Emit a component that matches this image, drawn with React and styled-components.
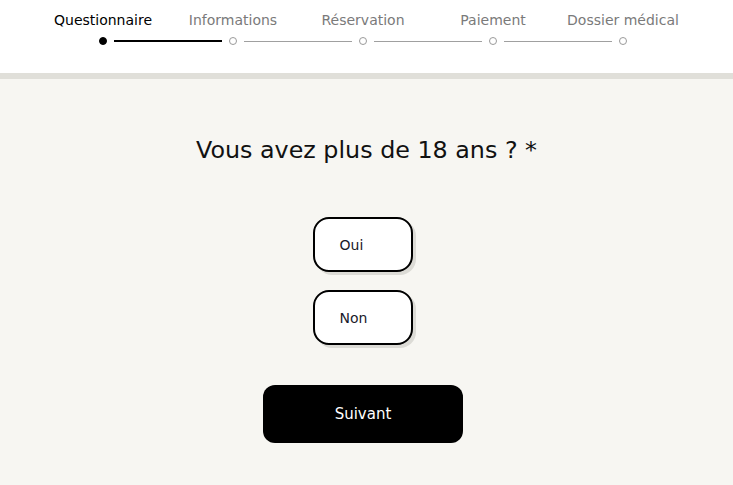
import styled, { createGlobalStyle } from "styled-components";

const GlobalStyle = createGlobalStyle`
  html, body {
    margin: 0;
    padding: 0;
    background: #f7f6f2;
    font-family: "DejaVu Sans", "Liberation Sans", sans-serif;
  }
`;

const steps = ["Questionnaire", "Informations", "Réservation", "Paiement", "Dossier médical"];

export default function App() {
  const current = 0;
  return (
    <>
      <GlobalStyle />
      <Page>
        <Header>
          <Labels>
            {steps.map((s, i) => (
              <Label key={s} active={i === current}>
                {s}
              </Label>
            ))}
          </Labels>
          <Track>
            {steps.map((s, i) => (
              <Step key={s}>
                <Dot active={i === current} />
                {i < steps.length - 1 && <Line active={i === current} />}
              </Step>
            ))}
          </Track>
        </Header>
        <Main>
          <Question>Vous avez plus de 18 ans ? *</Question>
          <Choices>
            <Choice>Oui</Choice>
            <Choice>Non</Choice>
          </Choices>
          <NextButton>Suivant</NextButton>
        </Main>
      </Page>
    </>
  );
}

const Page = styled.div`
  width: 733px;
  min-height: 485px;
  background: #f7f6f2;
`;

const Header = styled.header`
  background: #ffffff;
  border-bottom: 6px solid #e0dfd9;
  padding-top: 10px;
  height: 63px;
`;

const Labels = styled.div`
  display: grid;
  grid-template-columns: repeat(5, 130px);
  padding-left: 38px;
`;

const Label = styled.div`
  text-align: center;
  font-size: 14px;
  line-height: 20px;
  white-space: nowrap;
  color: ${(p) => (p.active ? "#000000" : "#7a7a7a")};
`;

const Track = styled.div`
  display: flex;
  align-items: center;
  padding-left: 99px;
  margin-top: 7px;
`;

const Step = styled.div`
  display: flex;
  align-items: center;
  gap: 7px;
  margin-right: 7px;
`;

const Dot = styled.span`
  width: 8px;
  height: 8px;
  border-radius: 50%;
  box-sizing: border-box;
  background: ${(p) => (p.active ? "#000000" : "#ffffff")};
  border: 1px solid ${(p) => (p.active ? "#000000" : "#9a9a9a")};
`;

const Line = styled.span`
  width: 108px;
  height: ${(p) => (p.active ? "1.5px" : "1px")};
  background: ${(p) => (p.active ? "#000000" : "#a0a0a0")};
`;

const Main = styled.main`
  display: flex;
  flex-direction: column;
  align-items: center;
  padding-top: 56px;
`;

const Question = styled.h1`
  margin: 0;
  font-size: 23.8px;
  font-weight: 400;
  color: #111111;
  line-height: 30px;
`;

const Choices = styled.div`
  display: flex;
  flex-direction: column;
  gap: 18px;
  margin-top: 52px;
  margin-right: 8px;
`;

const Choice = styled.button`
  width: 100px;
  height: 55px;
  box-sizing: border-box;
  border: 2px solid #000000;
  border-radius: 16px;
  background: #ffffff;
  box-shadow: 3px 3px 0 #dcdbd6;
  text-align: left;
  padding-left: 25px;
  font-family: inherit;
  font-size: 14px;
  color: #1a1a2a;
  cursor: pointer;
`;

const NextButton = styled.button`
  margin-top: 40px;
  margin-right: 7px;
  width: 200px;
  height: 58px;
  border: none;
  border-radius: 12px;
  background: #000000;
  color: #ffffff;
  font-family: inherit;
  font-size: 15px;
  cursor: pointer;
`;
